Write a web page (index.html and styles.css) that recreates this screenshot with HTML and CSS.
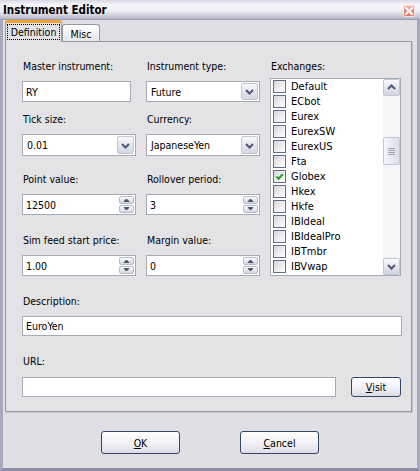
FILE: index.html
```html
<!DOCTYPE html>
<html>
<head>
<meta charset="utf-8">
<title>Instrument Editor</title>
<link rel="stylesheet" href="styles.css">
</head>
<body>
<div class="window">
  <div class="titlebar">
    <span class="title">Instrument Editor</span>
    <span class="close"><svg width="10" height="10" viewBox="0 0 10 10"><path d="M2 2 L8 8 M8 2 L2 8" stroke="#fff" stroke-width="1.8" stroke-linecap="square"/></svg></span>
  </div>
  <div class="client">
    <div class="tabs">
      <div class="tab active"><span class="focus">Definition</span></div>
      <div class="tab">Misc</div>
    </div>
    <div class="panel">
      <div class="grid">
        <div class="field">
          <label>Master instrument:</label>
          <div class="input">RY</div>
        </div>
        <div class="field">
          <label>Instrument type:</label>
          <div class="select"><span class="val">Future</span><span class="dd"><svg width="15" height="17" viewBox="0 0 15 17"><path d="M4 7 L7.5 10.5 L11 7" fill="none" stroke="#4a5878" stroke-width="2"/></svg></span></div>
        </div>
        <div class="field exch">
          <label>Exchanges:</label>
          <div class="list">
            <div class="items">
              <div class="item"><span class="cb"></span>Default</div>
              <div class="item"><span class="cb"></span>ECbot</div>
              <div class="item"><span class="cb"></span>Eurex</div>
              <div class="item"><span class="cb"></span>EurexSW</div>
              <div class="item"><span class="cb"></span>EurexUS</div>
              <div class="item"><span class="cb"></span>Fta</div>
              <div class="item"><span class="cb"><svg width="11" height="11" viewBox="0 0 11 11"><path d="M2.5 5.5 L4.5 7.8 L8.8 3.2" fill="none" stroke="#22a022" stroke-width="2"/></svg></span>Globex</div>
              <div class="item"><span class="cb"></span>Hkex</div>
              <div class="item"><span class="cb"></span>Hkfe</div>
              <div class="item"><span class="cb"></span>IBIdeal</div>
              <div class="item"><span class="cb"></span>IBIdealPro</div>
              <div class="item"><span class="cb"></span>IBTmbr</div>
              <div class="item"><span class="cb"></span>IBVwap</div>
            </div>
            <div class="scrollbar">
              <div class="sbtn"><svg width="15" height="15" viewBox="0 0 15 15"><path d="M4 9 L7.5 5.5 L11 9" fill="none" stroke="#4a5878" stroke-width="2"/></svg></div>
              <div class="track">
                <div class="thumb"><span class="grip"></span></div>
              </div>
              <div class="sbtn"><svg width="15" height="15" viewBox="0 0 15 15"><path d="M4 6 L7.5 9.5 L11 6" fill="none" stroke="#4a5878" stroke-width="2"/></svg></div>
            </div>
          </div>
        </div>
        <div class="field">
          <label>Tick size:</label>
          <div class="select tall"><span class="val">0.01</span><span class="dd"><svg width="15" height="17" viewBox="0 0 15 17"><path d="M4 7 L7.5 10.5 L11 7" fill="none" stroke="#4a5878" stroke-width="2"/></svg></span></div>
        </div>
        <div class="field">
          <label>Currency:</label>
          <div class="select tall"><span class="val">JapaneseYen</span><span class="dd"><svg width="15" height="17" viewBox="0 0 15 17"><path d="M4 7 L7.5 10.5 L11 7" fill="none" stroke="#4a5878" stroke-width="2"/></svg></span></div>
        </div>
        <div class="field">
          <label>Point value:</label>
          <div class="input spin"><span class="val">12500</span><span class="spins"><span class="sp"><svg width="13" height="8" viewBox="0 0 13 8"><path d="M4 5.5 L6.5 3 L9 5.5 Z" fill="#3e4a66" stroke="#3e4a66" stroke-width="0.8"/></svg></span><span class="sp"><svg width="13" height="8" viewBox="0 0 13 8"><path d="M4 2.5 L6.5 5 L9 2.5 Z" fill="#3e4a66" stroke="#3e4a66" stroke-width="0.8"/></svg></span></span></div>
        </div>
        <div class="field">
          <label>Rollover period:</label>
          <div class="input spin"><span class="val">3</span><span class="spins"><span class="sp"><svg width="13" height="8" viewBox="0 0 13 8"><path d="M4 5.5 L6.5 3 L9 5.5 Z" fill="#3e4a66" stroke="#3e4a66" stroke-width="0.8"/></svg></span><span class="sp"><svg width="13" height="8" viewBox="0 0 13 8"><path d="M4 2.5 L6.5 5 L9 2.5 Z" fill="#3e4a66" stroke="#3e4a66" stroke-width="0.8"/></svg></span></span></div>
        </div>
        <div class="field">
          <label>Sim feed start price:</label>
          <div class="input spin"><span class="val">1.00</span><span class="spins"><span class="sp"><svg width="13" height="8" viewBox="0 0 13 8"><path d="M4 5.5 L6.5 3 L9 5.5 Z" fill="#3e4a66" stroke="#3e4a66" stroke-width="0.8"/></svg></span><span class="sp"><svg width="13" height="8" viewBox="0 0 13 8"><path d="M4 2.5 L6.5 5 L9 2.5 Z" fill="#3e4a66" stroke="#3e4a66" stroke-width="0.8"/></svg></span></span></div>
        </div>
        <div class="field">
          <label>Margin value:</label>
          <div class="input spin"><span class="val">0</span><span class="spins"><span class="sp"><svg width="13" height="8" viewBox="0 0 13 8"><path d="M4 5.5 L6.5 3 L9 5.5 Z" fill="#3e4a66" stroke="#3e4a66" stroke-width="0.8"/></svg></span><span class="sp"><svg width="13" height="8" viewBox="0 0 13 8"><path d="M4 2.5 L6.5 5 L9 2.5 Z" fill="#3e4a66" stroke="#3e4a66" stroke-width="0.8"/></svg></span></span></div>
        </div>
      </div>
      <div class="field desc">
        <label>Description:</label>
        <div class="input wide">EuroYen</div>
      </div>
      <div class="field url">
        <label>URL:</label>
        <div class="urlrow">
          <div class="input urlinput"></div>
          <button class="btn visit"><u>V</u>isit</button>
        </div>
      </div>
    </div>
    <div class="footer">
      <button class="btn big"><u>O</u>K</button>
      <button class="btn big"><u>C</u>ancel</button>
    </div>
  </div>
</div>
</body>
</html>
```
FILE: styles.css
```css
* { box-sizing: border-box; }
html, body { margin: 0; padding: 0; }
body {
  width: 420px;
  height: 471px;
  overflow: hidden;
  background: #e0dfe3;
  font-family: "DejaVu Sans Condensed", "Liberation Sans", sans-serif;
  font-size: 10.5px;
  color: #000;
}
.window {
  width: 420px;
  height: 471px;
  display: flex;
  flex-direction: column;
  background: #e0dfe3;
}
.titlebar {
  height: 20px;
  flex: none;
  display: flex;
  align-items: center;
  justify-content: space-between;
  padding: 0 5px 0 3px;
  background: linear-gradient(to bottom, #d8d8e6 0%, #f6f6fa 25%, #eeeef4 55%, #d2d2de 80%, #b4b4c8 100%);
  border-bottom: 1px solid #9c9cb2;
}
.title {
  font-weight: bold;
  font-size: 11.5px;
}
.close {
  width: 12px;
  height: 12px;
  margin-top: 3px;
  display: flex;
  align-items: center;
  justify-content: center;
  background: linear-gradient(to bottom, #f4aca4, #e2766a);
  border: 1px solid #fbe4e0;
  border-radius: 2px;
}
.client {
  flex: 1;
  display: flex;
  flex-direction: column;
  border-left: 3px solid #a8a8bc;
  border-right: 3px solid #a8a8bc;
  border-bottom: 3px solid #8c8ca4;
  padding: 0 5px 0 2px;
}
.tabs {
  height: 21px;
  flex: none;
  display: flex;
  align-items: flex-end;
}
.tab {
  height: 17px;
  width: 38px;
  border: 1px solid #919b9c;
  border-bottom: none;
  border-radius: 3px 3px 0 0;
  background: linear-gradient(to bottom, #ffffff, #e6e6ec);
  display: flex;
  align-items: center;
  justify-content: center;
  padding-top: 1px;
}
.tab.active {
  height: 22px;
  width: 57px;
  margin-bottom: -1px;
  position: relative;
  z-index: 1;
  border-top: 3px solid #f0a030;
  background: #e3e3e6;
  padding: 0 1px 1px;
}
.focus {
  border: 1px dotted #000;
  width: 54px;
  height: 16px;
  display: flex;
  align-items: center;
  justify-content: center;
}
.panel {
  flex: none;
  height: 371px;
  border: 1px solid #919b9c;
  background: #e3e3e6;
  padding: 17px 0 0 16px;
  box-shadow: 1px 1px 0 #c8c8d2;
}
.grid {
  display: grid;
  grid-template-columns: 114px 114px 131px;
  grid-template-rows: 53px 60px 61px 61px;
  column-gap: 10px;
}
.field {
  display: flex;
  flex-direction: column;
}
.field label {
  display: block;
  height: 14px;
  line-height: 14px;
  margin-bottom: 8px;
  padding-left: 1px;
}
.input {
  height: 21px;
  border: 1px solid #a5acb5;
  background: #fff;
  padding: 0 3px;
  display: flex;
  align-items: center;
}
.grid .field:first-child .input { width: 109px; }
.select {
  height: 21px;
  border: 1px solid #a5acb5;
  background: #fff;
  display: flex;
  align-items: center;
  padding-left: 4px;
}
.select.tall { height: 22px; }
.val { flex: 1; }
.dd {
  width: 17px;
  height: calc(100% - 2px);
  margin-right: 1px;
  border: 1px solid #c2c7d6;
  border-radius: 2px;
  background: linear-gradient(to bottom, #f8f9fc, #d3d6e2);
  display: flex;
  align-items: center;
  justify-content: center;
}
.spin { padding-right: 1px; }
.spins {
  display: flex;
  flex-direction: column;
  gap: 1px;
  width: 15px;
}
.sp {
  height: 8px;
  border: 1px solid #b6bccb;
  border-radius: 2px;
  background: linear-gradient(to bottom, #fafbfd, #d2d5e0);
  display: flex;
  align-items: center;
  justify-content: center;
  overflow: hidden;
}
.exch {
  grid-column: 3;
  grid-row: 1 / 5;
}
.exch label { margin-bottom: 5px; }
.list {
  height: 198px;
  border: 1px solid #a5acb5;
  background: #fff;
  display: flex;
}
.items {
  flex: 1;
  display: flex;
  flex-direction: column;
  padding-left: 2px;
  font-size: 11px;
}
.item {
  height: 15px;
  display: flex;
  align-items: center;
}
.cb {
  width: 13px;
  height: 13px;
  margin-right: 5px;
  border: 1px solid #5f6d8c;
  background: linear-gradient(135deg, #d4d4da 0%, #ececf0 50%, #ffffff 100%);
  display: flex;
  align-items: center;
  justify-content: center;
}
.scrollbar {
  width: 17px;
  display: flex;
  flex-direction: column;
  background: #f5f5f7;
}
.sbtn {
  width: 17px;
  height: 17px;
  border: 1px solid #c2c7d6;
  border-radius: 2px;
  background: linear-gradient(to bottom, #fafbfd, #d0d3de);
  display: flex;
  align-items: center;
  justify-content: center;
}
.track {
  flex: 1;
  padding-top: 41px;
}
.thumb {
  height: 28px;
  border: 1px solid #c2c7d6;
  border-radius: 2px;
  background: linear-gradient(to right, #f6f7fb, #dcdee8);
  display: flex;
  align-items: center;
  justify-content: center;
}
.grip {
  width: 7px;
  height: 7px;
  background: repeating-linear-gradient(to bottom, #9aa0b4 0, #9aa0b4 1px, transparent 1px, transparent 2px);
}
.wide { width: 380px; height: 20px; }
.url { margin-top: 18px; }
.urlrow {
  display: flex;
  align-items: center;
  gap: 15px;
}
.urlinput { width: 314px; height: 20px; }
.btn {
  font-family: inherit;
  font-size: 10.5px;
  color: #000;
  border: 1px solid #34466a;
  border-radius: 3px;
  background: linear-gradient(to bottom, #ffffff 0%, #f2f2f6 50%, #dcdce6 100%);
  padding: 0;
  display: flex;
  align-items: center;
  justify-content: center;
}
.visit { width: 50px; height: 20px; margin-top: 1px; }
.footer {
  flex: 1;
  display: flex;
  justify-content: center;
  align-items: flex-start;
  gap: 60px;
  padding-top: 19px;
  margin: 0 -5px 0 -2px;
}
.big { width: 79px; height: 23px; }
```
